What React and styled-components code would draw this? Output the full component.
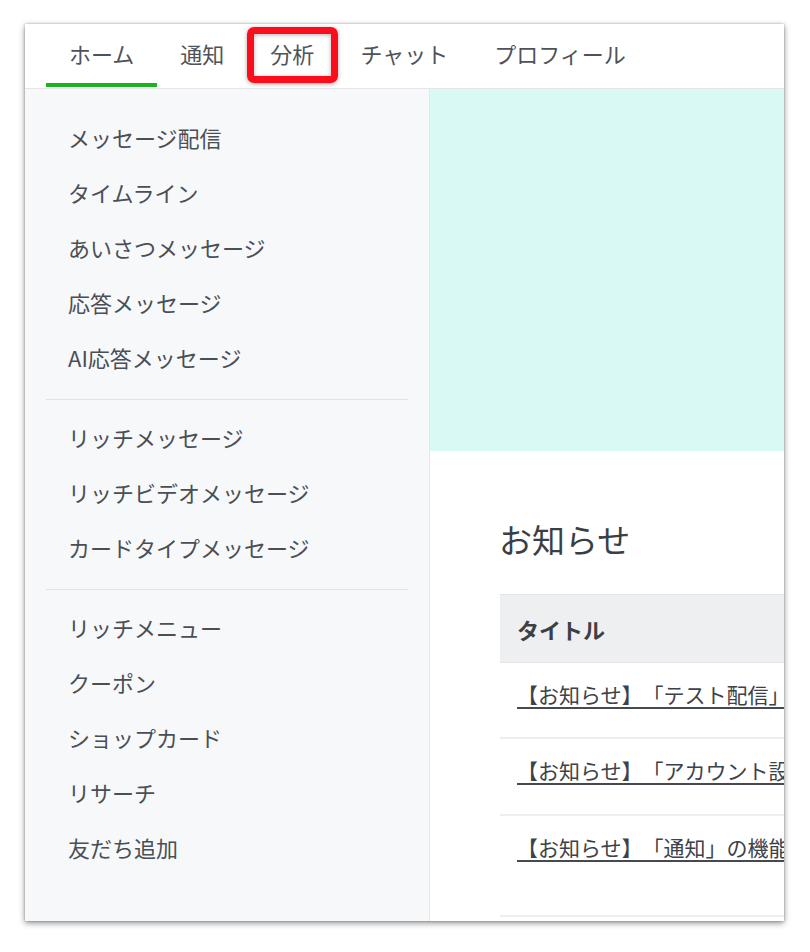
import React from "react";
import styled, { createGlobalStyle } from "styled-components";

const Global = createGlobalStyle`
  html, body { margin: 0; padding: 0; background: #ffffff; }
  body {
    font-family: "Noto Sans CJK JP", "Noto Sans", sans-serif;
    text-spacing-trim: space-all;
  }
  * { box-sizing: border-box; }
`;

const Page = styled.div`
  padding: 24px 0 0 25px;
  width: 810px;
  height: 952px;
`;

const Frame = styled.div`
  width: 759px;
  height: 897px;
  background: #fff;
  box-shadow: 0 2px 6px rgba(0, 0, 0, 0.45), 0 0 2px rgba(0, 0, 0, 0.25);
  display: flex;
  flex-direction: column;
  overflow: hidden;
`;

const TabBar = styled.nav`
  height: 65px;
  flex: none;
  display: flex;
  padding-left: 21px;
  border-bottom: 1px solid #e3e5e8;
  background: #fff;
`;

const Tab = styled.div`
  position: relative;
  height: 64px;
  padding: 0 23px 6px;
  display: flex;
  align-items: center;
  font-size: 22px;
  line-height: 1;
  color: #4e5359;
  white-space: nowrap;
  &::after {
    content: "";
    position: absolute;
    left: 0;
    right: 0;
    bottom: 1px;
    height: 4px;
    background: ${(p) => (p.$active ? "#1db31f" : "transparent")};
  }
`;

const Highlight = styled.span`
  position: absolute;
  top: 3px;
  bottom: 5px;
  left: 0;
  right: -1px;
  border: 7px solid #fc0d1c;
  border-radius: 7px;
  box-shadow: 0 1px 4px rgba(0, 0, 0, 0.35), inset 0 1px 4px rgba(0, 0, 0, 0.3);
  pointer-events: none;
`;

const Body = styled.div`
  flex: 1;
  display: flex;
  min-height: 0;
`;

const Sidebar = styled.aside`
  width: 405px;
  flex: none;
  background: #f7f8fa;
  border-right: 1px solid #e4e6e9;
  padding-top: 22px;
`;

const MenuItem = styled.div`
  height: 55px;
  display: flex;
  align-items: center;
  padding: 0 0 4px 43px;
  font-size: 22px;
  line-height: 1;
  color: #4a4f55;
  white-space: nowrap;
`;

const Divider = styled.hr`
  border: none;
  height: 1px;
  background: #e1e3e6;
  margin: 13px 21px 11px;
`;

const Main = styled.main`
  flex: 1;
  overflow: hidden;
  display: flex;
  flex-direction: column;
`;

const Banner = styled.div`
  height: 362px;
  flex: none;
  background: #d8f9f4;
`;

const Content = styled.section`
  padding: 64px 0 0 70px;
`;

const Heading = styled.h2`
  margin: 0 0 30px -1px;
  font-size: 33px;
  line-height: 49px;
  font-weight: 400;
  color: #3a3f45;
  white-space: nowrap;
`;

const Table = styled.div`
  width: 640px;
`;

const HeadRow = styled.div`
  height: 69px;
  display: flex;
  align-items: center;
  padding-left: 17px;
  background: #eeeff1;
  border-top: 1px solid #e1e3e6;
  border-bottom: 1px solid #e1e3e6;
  font-size: 22px;
  font-weight: 700;
  color: #3c4046;
`;

const Row = styled.div`
  height: ${(p) => p.$h}px;
  padding: 19px 0 0 17px;
  border-bottom: 2px solid #eceef0;
  white-space: nowrap;
`;

const Link = styled.a`
  font-size: 21px;
  line-height: 24px;
  color: #3d4248;
  text-decoration: underline;
  text-decoration-thickness: 2px;
  text-underline-offset: 4px;
  text-decoration-color: #454a50;
`;

const tabs = ["ホーム", "通知", "分析", "チャット", "プロフィール"];
const groups = [
  ["メッセージ配信", "タイムライン", "あいさつメッセージ", "応答メッセージ", "AI応答メッセージ"],
  ["リッチメッセージ", "リッチビデオメッセージ", "カードタイプメッセージ"],
  ["リッチメニュー", "クーポン", "ショップカード", "リサーチ", "友だち追加"],
];
const news = [
  { t: "【お知らせ】「テスト配信」機能のアップデートについて", h: 76 },
  { t: "【お知らせ】「アカウント設定」画面の変更について", h: 77 },
  { t: "【お知らせ】「通知」の機能改善について", h: 101 },
];

export default function App() {
  return (
    <Page>
      <Global />
      <Frame>
        <TabBar>
          {tabs.map((t, i) => (
            <Tab key={t} $active={i === 0}>
              {t}
              {t === "分析" && <Highlight />}
            </Tab>
          ))}
        </TabBar>
        <Body>
          <Sidebar>
            {groups.map((g, gi) => (
              <React.Fragment key={gi}>
                {gi > 0 && <Divider />}
                {g.map((item) => (
                  <MenuItem key={item}>{item}</MenuItem>
                ))}
              </React.Fragment>
            ))}
          </Sidebar>
          <Main>
            <Banner />
            <Content>
              <Heading>お知らせ</Heading>
              <Table>
                <HeadRow>タイトル</HeadRow>
                {news.map((n) => (
                  <Row key={n.t} $h={n.h}>
                    <Link href="#">{n.t}</Link>
                  </Row>
                ))}
              </Table>
            </Content>
          </Main>
        </Body>
      </Frame>
    </Page>
  );
}
